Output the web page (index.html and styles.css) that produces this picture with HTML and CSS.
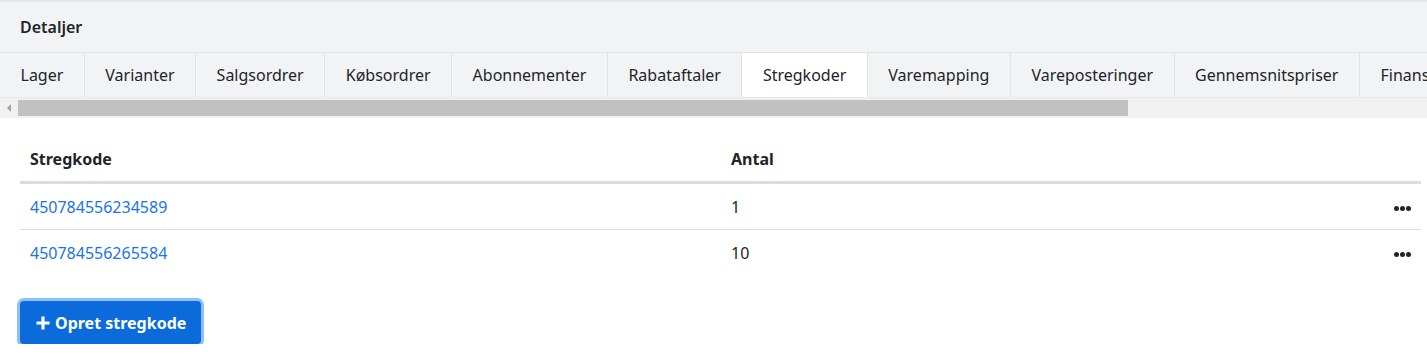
FILE: index.html
```html
<!DOCTYPE html>
<html lang="da">
<head>
  <meta charset="UTF-8">
  <meta name="viewport" content="width=device-width, initial-scale=1.0">
  <title>Detaljer</title>
  <link rel="stylesheet" href="styles.css">
</head>
<body>
  <div class="panel">
    <div class="panel-title">Detaljer</div>

    <!-- Faner -->
    <div class="tabs">
      <div class="tab">Lager</div>
      <div class="tab">Varianter</div>
      <div class="tab">Salgsordrer</div>
      <div class="tab">Købsordrer</div>
      <div class="tab">Abonnementer</div>
      <div class="tab">Rabataftaler</div>
      <div class="tab active">Stregkoder</div>
      <div class="tab">Varemapping</div>
      <div class="tab">Vareposteringer</div>
      <div class="tab">Gennemsnitspriser</div>
      <div class="tab">Finansposteringer</div>
    </div>
    <div class="scrollbar">
      <span class="arrow"></span>
      <div class="track"><div class="thumb"></div></div>
    </div>

    <div class="content">
      <table class="grid">
        <thead>
          <tr>
            <th class="col-code">Stregkode</th>
            <th>Antal</th>
            <th class="col-menu"></th>
          </tr>
        </thead>
        <tbody>
          <tr>
            <td><a href="#">450784556234589</a></td>
            <td>1</td>
            <td class="col-menu"><span class="dots"><i></i><i></i><i></i></span></td>
          </tr>
          <tr>
            <td><a href="#">450784556265584</a></td>
            <td>10</td>
            <td class="col-menu"><span class="dots"><i></i><i></i><i></i></span></td>
          </tr>
        </tbody>
      </table>

      <button class="btn-primary">
        <svg width="14" height="14" viewBox="0 0 14 14"><path d="M7 0.5v13M0.5 7h13" stroke="#fff" stroke-width="3.2"/></svg>
        Opret stregkode
      </button>
    </div>
  </div>
</body>
</html>
```

FILE: styles.css
```css
body {
  margin: 0;
  font-family: "Noto Sans", "Open Sans", sans-serif;
  color: #212529;
  background: #fff;
}

.panel {
  border-top: 2px solid #e4e6e9;
}

.panel-title {
  background: #f2f3f5;
  height: 50px;
  line-height: 50px;
  padding-left: 20px;
  font-size: 16px;
  font-weight: 600;
  border-bottom: 1px solid #e0e2e5;
}

/* Fanerne */
.tabs {
  display: flex;
  background: #f2f3f5;
  overflow: hidden;
  white-space: nowrap;
}

.tab {
  flex: none;
  height: 44px;
  line-height: 44px;
  padding: 0 20.5px;
  font-size: 16px;
  border-right: 1px solid #e0e2e5;
}

.tab.active {
  background: #fff;
}

.scrollbar {
  display: flex;
  align-items: center;
  height: 20px;
  background: #f1f1f1;
  border-top: 1px solid #e8e8e8;
}

.arrow {
  width: 0;
  height: 0;
  margin: 0 7px 0 7px;
  border-top: 4px solid transparent;
  border-bottom: 4px solid transparent;
  border-right: 4px solid #a3a3a3;
}

.track {
  flex: 1;
  padding-right: 299px;
}

.thumb {
  height: 16px;
  background: #c1c1c1;
}

.content {
  padding: 19px 6px 0 20px;
}

.grid {
  width: 100%;
  border-collapse: collapse;
  font-size: 16px;
}

.grid th {
  text-align: left;
  font-weight: 700;
  height: 44px;
  padding: 0 10px;
  border-bottom: 3px solid #dcdcdc;
}

.grid td {
  height: 45px;
  padding: 0 10px;
  border-bottom: 1px solid #dcdcdc;
}

.grid tbody tr:last-child td {
  border-bottom: none;
}

.col-code {
  width: 681px;
}

.col-menu {
  width: 30px;
  text-align: right;
}

.grid a {
  color: #1a73e8;
  text-decoration: none;
}

.dots {
  display: inline-flex;
  gap: 1px;
  vertical-align: middle;
}

.dots i {
  width: 5px;
  height: 5px;
  border-radius: 50%;
  background: #212529;
}

.btn-primary {
  display: inline-flex;
  align-items: center;
  gap: 5px;
  margin: 26px 0 0 0;
  height: 43px;
  padding: 0 15px 0 16px;
  font-family: inherit;
  font-size: 16px;
  font-weight: 700;
  color: #fff;
  background: #0b6bdb;
  border: none;
  border-radius: 4px;
  box-shadow: 0 0 0 3px #8ec0f7;
}
```
